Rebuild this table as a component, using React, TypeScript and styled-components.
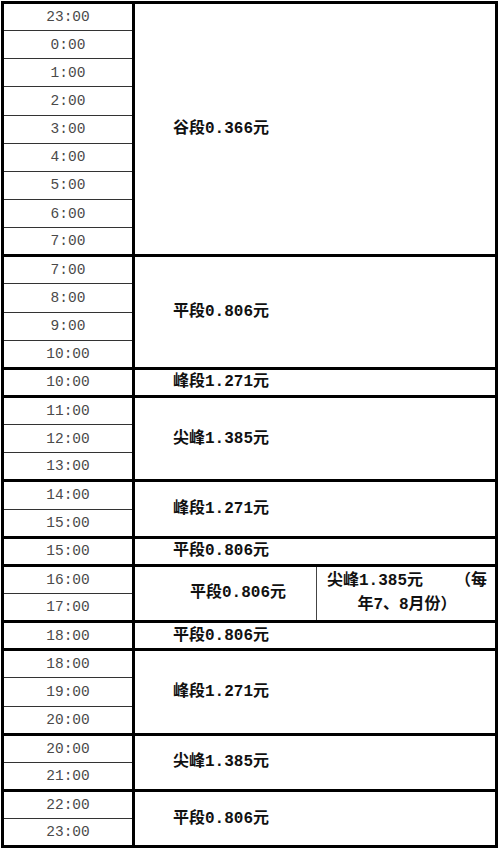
import { FC } from 'react';
import styled, { createGlobalStyle } from 'styled-components';

type Group = {
    times: string[];
    label?: string;
    split?: boolean;
};

const groups: Group[] = [
    { times: ['23:00', '0:00', '1:00', '2:00', '3:00', '4:00', '5:00', '6:00', '7:00'], label: '谷段0.366元' },
    { times: ['7:00', '8:00', '9:00', '10:00'], label: '平段0.806元' },
    { times: ['10:00'], label: '峰段1.271元' },
    { times: ['11:00', '12:00', '13:00'], label: '尖峰1.385元' },
    { times: ['14:00', '15:00'], label: '峰段1.271元' },
    { times: ['15:00'], label: '平段0.806元' },
    { times: ['16:00', '17:00'], split: true },
    { times: ['18:00'], label: '平段0.806元' },
    { times: ['18:00', '19:00', '20:00'], label: '峰段1.271元' },
    { times: ['20:00', '21:00'], label: '尖峰1.385元' },
    { times: ['22:00', '23:00'], label: '平段0.806元' },
];

const GlobalStyle = createGlobalStyle`
    html, body {
        margin: 0;
        padding: 0;
        background: #fff;
    }
`;

const App: FC = () => {
    return (
        <>
            <GlobalStyle />
            <Page>
                <PriceTable>
                    <colgroup>
                        <col style={{ width: 131 }} />
                        <col style={{ width: 183 }} />
                        <col />
                    </colgroup>
                    <tbody>
                        {groups.map((g, gi) =>
                            g.times.map((t, ti) => (
                                <Row key={`${gi}-${ti}`}>
                                    <TimeCell $groupStart={ti === 0}>{t}</TimeCell>
                                    {ti === 0 && !g.split && (
                                        <LabelCell rowSpan={g.times.length} colSpan={2}>
                                            {g.label}
                                        </LabelCell>
                                    )}
                                    {ti === 0 && g.split && (
                                        <>
                                            <SplitLeft rowSpan={2}>平段0.806元</SplitLeft>
                                            <SplitRight rowSpan={2}>
                                                <NoteLine>
                                                    <span>尖峰1.385元</span>
                                                    <span>（每</span>
                                                </NoteLine>
                                                <NoteLine $center>年7、8月份）</NoteLine>
                                            </SplitRight>
                                        </>
                                    )}
                                </Row>
                            ))
                        )}
                    </tbody>
                </PriceTable>
            </Page>
        </>
    );
};

export default App;

const Page = styled.div`
    width: 500px;
    height: 850px;
    padding: 1px 0 0 1px;
    box-sizing: border-box;
`;

const PriceTable = styled.table`
    width: 497px;
    border-collapse: collapse;
    table-layout: fixed;
    border: 3px solid #000;
`;

const Row = styled.tr`
    height: 28.15px;
`;

const TimeCell = styled.td<{ $groupStart: boolean }>`
    padding: 0;
    text-align: center;
    font-family: "Liberation Mono", "Noto Sans CJK SC", monospace;
    font-size: 14.5px;
    color: #4a4a4a;
    border-left: 3px solid #000;
    border-right: 3px solid #000;
    border-top: ${p => (p.$groupStart ? '3px solid #000' : '1px solid #333')};
    line-height: 18px;
`;

const LabelCell = styled.td`
    padding: 0 0 0 38px;
    text-align: left;
    vertical-align: middle;
    font-family: "Liberation Mono", "Noto Sans CJK SC", monospace;
    font-size: 16px;
    font-weight: 700;
    color: #111;
    border-top: 3px solid #000;
    border-bottom: 3px solid #000;
    line-height: 20px;
`;

const SplitLeft = styled(LabelCell)`
    padding-left: 55px;
    border-right: 1px solid #444;
`;

const SplitRight = styled.td`
    padding: 0 8px 0 10px;
    vertical-align: middle;
    font-family: "Liberation Mono", "Noto Sans CJK SC", monospace;
    font-size: 16px;
    font-weight: 700;
    color: #111;
    border-top: 3px solid #000;
    border-bottom: 3px solid #000;
`;

const NoteLine = styled.div<{ $center?: boolean }>`
    display: flex;
    justify-content: ${p => (p.$center ? 'center' : 'space-between')};
    line-height: 24px;
`;
